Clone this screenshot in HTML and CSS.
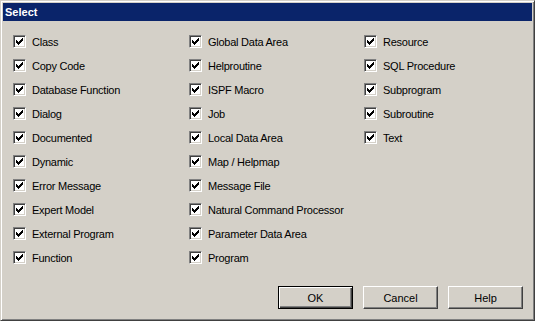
FILE: index.html
```html
<!DOCTYPE html>
<html lang="en">
<head>
  <meta charset="UTF-8" />
  <title>Select</title>
  <link rel="stylesheet" href="styles.css">
</head>
<body>
  <div class="window">
    <div class="title-bar">Select</div>

    <div class="options">
      <label class="option"><span class="check"><svg viewBox="0 0 7 7" width="7" height="7"><path d="M6 0h1v1h-1zM5 1h2v1h-2zM0 2h1v1h-1zM4 2h3v1h-3zM0 3h2v1h-2zM3 3h3v1h-3zM0 4h5v1h-5zM1 5h3v1h-3zM2 6h1v1h-1z"/></svg></span>Class</label>
      <label class="option"><span class="check"><svg viewBox="0 0 7 7" width="7" height="7"><path d="M6 0h1v1h-1zM5 1h2v1h-2zM0 2h1v1h-1zM4 2h3v1h-3zM0 3h2v1h-2zM3 3h3v1h-3zM0 4h5v1h-5zM1 5h3v1h-3zM2 6h1v1h-1z"/></svg></span>Global Data Area</label>
      <label class="option"><span class="check"><svg viewBox="0 0 7 7" width="7" height="7"><path d="M6 0h1v1h-1zM5 1h2v1h-2zM0 2h1v1h-1zM4 2h3v1h-3zM0 3h2v1h-2zM3 3h3v1h-3zM0 4h5v1h-5zM1 5h3v1h-3zM2 6h1v1h-1z"/></svg></span>Resource</label>

      <label class="option"><span class="check"><svg viewBox="0 0 7 7" width="7" height="7"><path d="M6 0h1v1h-1zM5 1h2v1h-2zM0 2h1v1h-1zM4 2h3v1h-3zM0 3h2v1h-2zM3 3h3v1h-3zM0 4h5v1h-5zM1 5h3v1h-3zM2 6h1v1h-1z"/></svg></span>Copy Code</label>
      <label class="option"><span class="check"><svg viewBox="0 0 7 7" width="7" height="7"><path d="M6 0h1v1h-1zM5 1h2v1h-2zM0 2h1v1h-1zM4 2h3v1h-3zM0 3h2v1h-2zM3 3h3v1h-3zM0 4h5v1h-5zM1 5h3v1h-3zM2 6h1v1h-1z"/></svg></span>Helproutine</label>
      <label class="option"><span class="check"><svg viewBox="0 0 7 7" width="7" height="7"><path d="M6 0h1v1h-1zM5 1h2v1h-2zM0 2h1v1h-1zM4 2h3v1h-3zM0 3h2v1h-2zM3 3h3v1h-3zM0 4h5v1h-5zM1 5h3v1h-3zM2 6h1v1h-1z"/></svg></span>SQL Procedure</label>

      <label class="option"><span class="check"><svg viewBox="0 0 7 7" width="7" height="7"><path d="M6 0h1v1h-1zM5 1h2v1h-2zM0 2h1v1h-1zM4 2h3v1h-3zM0 3h2v1h-2zM3 3h3v1h-3zM0 4h5v1h-5zM1 5h3v1h-3zM2 6h1v1h-1z"/></svg></span>Database Function</label>
      <label class="option"><span class="check"><svg viewBox="0 0 7 7" width="7" height="7"><path d="M6 0h1v1h-1zM5 1h2v1h-2zM0 2h1v1h-1zM4 2h3v1h-3zM0 3h2v1h-2zM3 3h3v1h-3zM0 4h5v1h-5zM1 5h3v1h-3zM2 6h1v1h-1z"/></svg></span>ISPF Macro</label>
      <label class="option"><span class="check"><svg viewBox="0 0 7 7" width="7" height="7"><path d="M6 0h1v1h-1zM5 1h2v1h-2zM0 2h1v1h-1zM4 2h3v1h-3zM0 3h2v1h-2zM3 3h3v1h-3zM0 4h5v1h-5zM1 5h3v1h-3zM2 6h1v1h-1z"/></svg></span>Subprogram</label>

      <label class="option"><span class="check"><svg viewBox="0 0 7 7" width="7" height="7"><path d="M6 0h1v1h-1zM5 1h2v1h-2zM0 2h1v1h-1zM4 2h3v1h-3zM0 3h2v1h-2zM3 3h3v1h-3zM0 4h5v1h-5zM1 5h3v1h-3zM2 6h1v1h-1z"/></svg></span>Dialog</label>
      <label class="option"><span class="check"><svg viewBox="0 0 7 7" width="7" height="7"><path d="M6 0h1v1h-1zM5 1h2v1h-2zM0 2h1v1h-1zM4 2h3v1h-3zM0 3h2v1h-2zM3 3h3v1h-3zM0 4h5v1h-5zM1 5h3v1h-3zM2 6h1v1h-1z"/></svg></span>Job</label>
      <label class="option"><span class="check"><svg viewBox="0 0 7 7" width="7" height="7"><path d="M6 0h1v1h-1zM5 1h2v1h-2zM0 2h1v1h-1zM4 2h3v1h-3zM0 3h2v1h-2zM3 3h3v1h-3zM0 4h5v1h-5zM1 5h3v1h-3zM2 6h1v1h-1z"/></svg></span>Subroutine</label>

      <label class="option"><span class="check"><svg viewBox="0 0 7 7" width="7" height="7"><path d="M6 0h1v1h-1zM5 1h2v1h-2zM0 2h1v1h-1zM4 2h3v1h-3zM0 3h2v1h-2zM3 3h3v1h-3zM0 4h5v1h-5zM1 5h3v1h-3zM2 6h1v1h-1z"/></svg></span>Documented</label>
      <label class="option"><span class="check"><svg viewBox="0 0 7 7" width="7" height="7"><path d="M6 0h1v1h-1zM5 1h2v1h-2zM0 2h1v1h-1zM4 2h3v1h-3zM0 3h2v1h-2zM3 3h3v1h-3zM0 4h5v1h-5zM1 5h3v1h-3zM2 6h1v1h-1z"/></svg></span>Local Data Area</label>
      <label class="option"><span class="check"><svg viewBox="0 0 7 7" width="7" height="7"><path d="M6 0h1v1h-1zM5 1h2v1h-2zM0 2h1v1h-1zM4 2h3v1h-3zM0 3h2v1h-2zM3 3h3v1h-3zM0 4h5v1h-5zM1 5h3v1h-3zM2 6h1v1h-1z"/></svg></span>Text</label>

      <label class="option"><span class="check"><svg viewBox="0 0 7 7" width="7" height="7"><path d="M6 0h1v1h-1zM5 1h2v1h-2zM0 2h1v1h-1zM4 2h3v1h-3zM0 3h2v1h-2zM3 3h3v1h-3zM0 4h5v1h-5zM1 5h3v1h-3zM2 6h1v1h-1z"/></svg></span>Dynamic</label>
      <label class="option"><span class="check"><svg viewBox="0 0 7 7" width="7" height="7"><path d="M6 0h1v1h-1zM5 1h2v1h-2zM0 2h1v1h-1zM4 2h3v1h-3zM0 3h2v1h-2zM3 3h3v1h-3zM0 4h5v1h-5zM1 5h3v1h-3zM2 6h1v1h-1z"/></svg></span>Map / Helpmap</label>
      <span></span>

      <label class="option"><span class="check"><svg viewBox="0 0 7 7" width="7" height="7"><path d="M6 0h1v1h-1zM5 1h2v1h-2zM0 2h1v1h-1zM4 2h3v1h-3zM0 3h2v1h-2zM3 3h3v1h-3zM0 4h5v1h-5zM1 5h3v1h-3zM2 6h1v1h-1z"/></svg></span>Error Message</label>
      <label class="option"><span class="check"><svg viewBox="0 0 7 7" width="7" height="7"><path d="M6 0h1v1h-1zM5 1h2v1h-2zM0 2h1v1h-1zM4 2h3v1h-3zM0 3h2v1h-2zM3 3h3v1h-3zM0 4h5v1h-5zM1 5h3v1h-3zM2 6h1v1h-1z"/></svg></span>Message File</label>
      <span></span>

      <label class="option"><span class="check"><svg viewBox="0 0 7 7" width="7" height="7"><path d="M6 0h1v1h-1zM5 1h2v1h-2zM0 2h1v1h-1zM4 2h3v1h-3zM0 3h2v1h-2zM3 3h3v1h-3zM0 4h5v1h-5zM1 5h3v1h-3zM2 6h1v1h-1z"/></svg></span>Expert Model</label>
      <label class="option"><span class="check"><svg viewBox="0 0 7 7" width="7" height="7"><path d="M6 0h1v1h-1zM5 1h2v1h-2zM0 2h1v1h-1zM4 2h3v1h-3zM0 3h2v1h-2zM3 3h3v1h-3zM0 4h5v1h-5zM1 5h3v1h-3zM2 6h1v1h-1z"/></svg></span>Natural Command Processor</label>
      <span></span>

      <label class="option"><span class="check"><svg viewBox="0 0 7 7" width="7" height="7"><path d="M6 0h1v1h-1zM5 1h2v1h-2zM0 2h1v1h-1zM4 2h3v1h-3zM0 3h2v1h-2zM3 3h3v1h-3zM0 4h5v1h-5zM1 5h3v1h-3zM2 6h1v1h-1z"/></svg></span>External Program</label>
      <label class="option"><span class="check"><svg viewBox="0 0 7 7" width="7" height="7"><path d="M6 0h1v1h-1zM5 1h2v1h-2zM0 2h1v1h-1zM4 2h3v1h-3zM0 3h2v1h-2zM3 3h3v1h-3zM0 4h5v1h-5zM1 5h3v1h-3zM2 6h1v1h-1z"/></svg></span>Parameter Data Area</label>
      <span></span>

      <label class="option"><span class="check"><svg viewBox="0 0 7 7" width="7" height="7"><path d="M6 0h1v1h-1zM5 1h2v1h-2zM0 2h1v1h-1zM4 2h3v1h-3zM0 3h2v1h-2zM3 3h3v1h-3zM0 4h5v1h-5zM1 5h3v1h-3zM2 6h1v1h-1z"/></svg></span>Function</label>
      <label class="option"><span class="check"><svg viewBox="0 0 7 7" width="7" height="7"><path d="M6 0h1v1h-1zM5 1h2v1h-2zM0 2h1v1h-1zM4 2h3v1h-3zM0 3h2v1h-2zM3 3h3v1h-3zM0 4h5v1h-5zM1 5h3v1h-3zM2 6h1v1h-1z"/></svg></span>Program</label>
      <span></span>
    </div>

    <div class="buttons">
      <button class="btn default">OK</button>
      <button class="btn">Cancel</button>
      <button class="btn">Help</button>
    </div>
  </div>
</body>
</html>
```

FILE: styles.css
```css
body { margin: 0; background: #d4d0c8; font-family: "Liberation Sans", Arial, sans-serif; font-size: 11px; color: #000; }

.window {
  width: 535px; height: 321px; box-sizing: border-box;
  display: flex; flex-direction: column;
  background: #d4d0c8; padding: 2px;
  border: 1px solid; border-color: #d4d0c8 #404040 #404040 #d4d0c8;
  box-shadow: inset 1px 1px #fff, inset -1px -1px #808080;
}

.title-bar { height: 18px; line-height: 18px; padding-left: 2px; background: #0a246a; color: #fff; font-weight: bold; font-size: 11px; }

.options {
  display: grid; grid-template-columns: 176px 175px 1fr;
  row-gap: 11px; padding: 14px 0 0 10px;
}
.option { display: flex; align-items: center; gap: 6px; height: 13px; white-space: nowrap; letter-spacing: -0.25px; }

.check {
  width: 13px; height: 13px; box-sizing: border-box; padding: 2px; flex: none;
  background: #fff; border: 1px solid; border-color: #808080 #fff #fff #808080;
  box-shadow: inset 1px 1px #404040, inset -1px -1px #d4d0c8;
}
.check svg { display: block; shape-rendering: crispEdges; }

.buttons { margin-top: auto; display: flex; justify-content: flex-end; gap: 10px; padding: 0 9px 9px 0; }
.btn {
  width: 75px; height: 23px; box-sizing: border-box; padding: 0;
  font-family: "Liberation Sans", Arial, sans-serif; font-size: 11px; color: #000;
  background: #d4d0c8; border: 1px solid; border-color: #fff #404040 #404040 #fff;
  box-shadow: inset -1px -1px #808080;
}
.btn.default { border: 1px solid #000; box-shadow: inset 1px 1px #fff, inset -1px -1px #404040, inset -2px -2px #808080; }
```
